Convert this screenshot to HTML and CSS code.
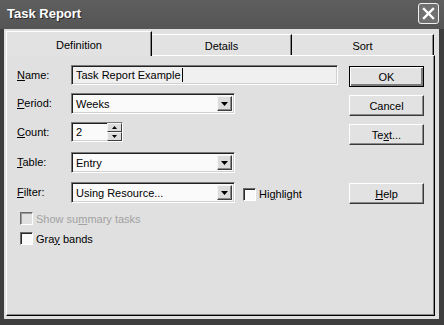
FILE: index.html
```html
<!DOCTYPE html>
<html lang="en">
<head>
    <meta charset="UTF-8">
    <title>Task Report</title>
    <link rel="stylesheet" href="styles.css">
</head>
<body>
<div class="window">
    <div class="titlebar">
        <span class="title">Task Report</span>
        <div class="close">
            <svg width="13" height="13" viewBox="0 0 13 13"><path d="M2 2 L11 11 M11 2 L2 11" stroke="#fff" stroke-width="2.4" stroke-linecap="square"/></svg>
        </div>
    </div>
    <div class="body">
        <div class="tabs">
            <div class="tab active">Definition</div>
            <div class="tab">Details</div>
            <div class="tab">Sort</div>
        </div>
        <div class="page">
            <div class="form">
                <div class="row">
                    <label class="label"><u>N</u>ame:</label>
                    <div class="field name-field"><span>Task Report Example</span><span class="caret"></span></div>
                </div>
                <div class="row">
                    <label class="label"><u>P</u>eriod:</label>
                    <div class="field select">
                        <span class="value">Weeks</span>
                        <span class="drop"><svg width="7" height="4" viewBox="0 0 7 4"><path d="M0 0 H7 L3.5 4 Z" fill="#000"/></svg></span>
                    </div>
                </div>
                <div class="row">
                    <label class="label"><u>C</u>ount:</label>
                    <div class="field spin">
                        <span class="value">2</span>
                        <span class="spin-btns">
                            <span class="spin-btn"><svg width="5" height="3" viewBox="0 0 5 3"><path d="M2.5 0 L5 3 H0 Z" fill="#000"/></svg></span>
                            <span class="spin-btn"><svg width="5" height="3" viewBox="0 0 5 3"><path d="M0 0 H5 L2.5 3 Z" fill="#000"/></svg></span>
                        </span>
                    </div>
                </div>
                <div class="row">
                    <label class="label"><u>T</u>able:</label>
                    <div class="field select">
                        <span class="value">Entry</span>
                        <span class="drop"><svg width="7" height="4" viewBox="0 0 7 4"><path d="M0 0 H7 L3.5 4 Z" fill="#000"/></svg></span>
                    </div>
                </div>
                <div class="row">
                    <label class="label"><u>F</u>ilter:</label>
                    <div class="field select">
                        <span class="value">Using Resource...</span>
                        <span class="drop"><svg width="7" height="4" viewBox="0 0 7 4"><path d="M0 0 H7 L3.5 4 Z" fill="#000"/></svg></span>
                    </div>
                    <span class="check highlight"><span class="box"></span><span>Hi<u>g</u>hlight</span></span>
                </div>
                <div class="row">
                    <span class="check disabled"><span class="box"></span><span>Show su<u>m</u>mary tasks</span></span>
                </div>
                <div class="row">
                    <span class="check"><span class="box"></span><span>Gra<u>y</u> bands</span></span>
                </div>
            </div>
            <div class="buttons">
                <div class="btn default">OK</div>
                <div class="btn">Cancel</div>
                <div class="btn"><span>Te<u>x</u>t...</span></div>
                <div class="btn help"><span><u>H</u>elp</span></div>
            </div>
        </div>
    </div>
</div>
</body>
</html>
```

FILE: styles.css
```css
body {
    margin: 0;
    font-family: "Liberation Sans", Arial, sans-serif;
    font-size: 11px;
    color: #000;
    background: #3a3a3a;
}
.window {
    width: 444px;
    height: 325px;
    box-sizing: border-box;
    padding: 0 5px 6px 4px;
    background: #3e3e3e;
    display: flex;
    flex-direction: column;
}
.titlebar {
    height: 29px;
    display: flex;
    align-items: center;
    justify-content: space-between;
    background: linear-gradient(#5e5e5e, #555555);
    margin: 0 -5px 0 -4px;
    padding-left: 7px;
    padding-right: 5px;
}
.title {
    color: #fff;
    font-weight: bold;
    font-size: 13px;
    text-shadow: 1px 1px 0 #2a2a2a;
    margin-top: -2px;
}
.close {
    width: 19px;
    height: 19px;
    border: 1px solid #f0f0f0;
    border-radius: 3px;
    background: #707070;
    display: flex;
    align-items: center;
    justify-content: center;
    margin-top: -3px;
}
.body {
    flex: 1;
    background: #e0e0e0;
    padding: 2px 4px 3px 2px;
    display: flex;
    flex-direction: column;
}
.tabs {
    display: flex;
    height: 24px;
    align-items: flex-end;
    position: relative;
    z-index: 1;
}
.tab {
    height: 21px;
    box-sizing: border-box;
    border-top: 1px solid #fff;
    border-left: 1px solid #fff;
    border-right: 1px solid #000;
    box-shadow: inset -1px 0 #888;
    display: flex;
    align-items: center;
    justify-content: center;
    background: #e2e2e2;
    padding-top: 1px;
}
.tab:nth-child(1) { width: 146px; }
.tab:nth-child(2) { width: 140px; border-left: none; }
.tab:nth-child(3) { width: 142px; border-left: none; }
.tab.active {
    height: 25px;
    margin-bottom: -1px;
    padding-top: 2px;
    padding-bottom: 0;
}
.page {
    flex: 1;
    border-top: 1px solid #fff;
    border-left: 1px solid #fff;
    border-right: 1px solid #000;
    border-bottom: 1px solid #000;
    box-shadow: inset -1px -1px #8a8a8a;
    display: flex;
    padding: 9px 0 0 10px;
}
.form {
    width: 321px;
    display: grid;
    grid-template-rows: 28px 29px 30px 30px 30px 20px 20px;
    align-content: start;
}
.row {
    display: flex;
    align-items: flex-start;
}
.label {
    width: 54px;
    height: 20px;
    line-height: 20px;
    flex: none;
}
.field {
    box-sizing: border-box;
    height: 20px;
    border: 1px solid;
    border-color: #7a7a7a #fff #fff #7a7a7a;
    box-shadow: inset 1px 1px #202020, inset -1px -1px #d0d0d0;
    background: #fafafa;
    display: flex;
    align-items: center;
    padding-left: 4px;
    white-space: nowrap;
}
.name-field {
    width: 267px;
    background: #f0f0f0;
}
.caret {
    width: 1px;
    height: 14px;
    background: #000;
    margin-left: 1px;
}
.select {
    width: 164px;
    height: 21px;
    padding-right: 2px;
}
.select .value {
    flex: 1;
}
.drop {
    width: 15px;
    height: 15px;
    box-sizing: border-box;
    border: 1px solid;
    border-color: #f4f4f4 #404040 #404040 #f4f4f4;
    box-shadow: inset -1px -1px #8a8a8a;
    background: #dcdcdc;
    display: flex;
    align-items: center;
    justify-content: center;
}
.spin {
    width: 52px;
    padding-right: 0;
}
.spin .value {
    flex: 1;
}
.spin-btns {
    width: 15px;
    height: 18px;
    display: flex;
    flex-direction: column;
}
.spin-btn {
    flex: 1;
    box-sizing: border-box;
    border: 1px solid;
    border-color: #f4f4f4 #404040 #404040 #f4f4f4;
    background: #dcdcdc;
    display: flex;
    align-items: center;
    justify-content: center;
}
.check {
    display: flex;
    align-items: center;
    height: 13px;
    margin-left: 3px;
    white-space: nowrap;
}
.box {
    width: 11px;
    height: 11px;
    border: 1px solid;
    border-color: #6a6a6a #fff #fff #6a6a6a;
    box-shadow: inset 1px 1px #2a2a2a;
    background: #fafafa;
    margin-right: 3px;
    flex: none;
}
.highlight {
    height: 20px;
    margin-left: 8px;
    margin-top: 2px;
}
.check.disabled {
    color: #a2a2a2;
}
.check.disabled .box {
    background: #e0e0e0;
    box-shadow: inset 1px 1px #9a9a9a;
}
.buttons {
    width: 75px;
    margin-left: 11px;
    padding-top: 1px;
    display: flex;
    flex-direction: column;
    gap: 8px;
}
.btn {
    box-sizing: border-box;
    height: 21px;
    border: 1px solid;
    border-color: #fff #3a3a3a #3a3a3a #fff;
    box-shadow: inset -1px -1px #8a8a8a;
    background: #e2e2e2;
    display: flex;
    align-items: center;
    justify-content: center;
}
.btn.default {
    border: 1px solid #000;
    box-shadow: inset 1px 1px #fff, inset -2px -2px #7a7a7a;
}
.btn.help {
    margin-top: 30px;
}
```
